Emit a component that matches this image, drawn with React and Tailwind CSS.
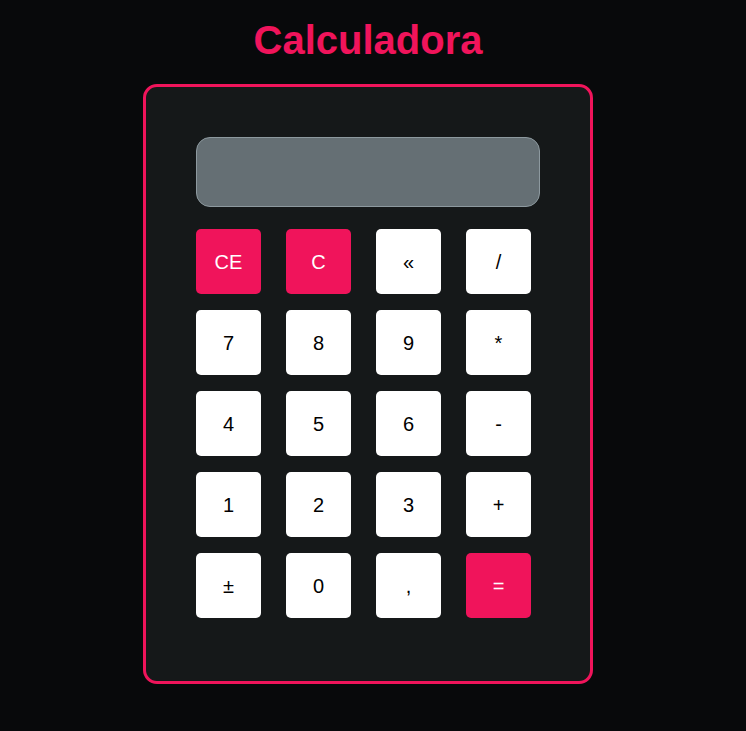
export default function App() {
  const rows = [
    [["CE", true], ["C", true], ["«", false], ["/", false]],
    [["7"], ["8"], ["9"], ["*"]],
    [["4"], ["5"], ["6"], ["-"]],
    [["1"], ["2"], ["3"], ["+"]],
    [["±"], ["0"], [","], ["=", true]],
  ];
  return (
    <div className="min-h-[731px] w-full bg-[#08090b]" style={{ fontFamily: '"Liberation Sans", Arial, sans-serif' }}>
      <div className="w-[736px] flex flex-col items-center pt-[17px]">
        <h1 className="text-[40px] leading-[46px] font-bold text-[#f0145b]">Calculadora</h1>
        <div className="mt-[21px] w-[450px] h-[600px] border-[3px] border-[#f0145b] rounded-[14px] bg-[#151819] pt-[50px] pl-[50px]">
          <div className="w-[344px] h-[70px] rounded-[14px] bg-[#656f74] border border-[#8d999f]"></div>
          <div className="mt-[22px] grid grid-cols-[65px_65px_65px_65px] gap-x-[25px] gap-y-[16px]">
            {rows.flat().map(([label, pink], i) => (
              <button
                key={i}
                className={
                  "w-[65px] h-[65px] rounded-[5px] flex items-center justify-center text-[20px] " +
                  (pink ? "bg-[#f0145b] text-white" : "bg-white text-black")
                }
              >
                {label}
              </button>
            ))}
          </div>
        </div>
      </div>
    </div>
  );
}
